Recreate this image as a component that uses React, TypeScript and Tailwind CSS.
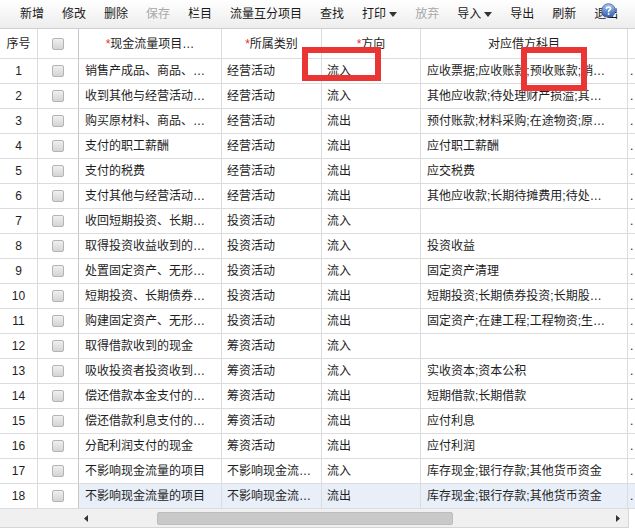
import React from "react";

type Row = [string, string, string, string];

const rows: Row[] = [
  ["销售产成品、商品、…", "经营活动", "流入", "应收票据;应收账款;预收账款;销…"],
  ["收到其他与经营活动…", "经营活动", "流入", "其他应收款;待处理财产损溢;其…"],
  ["购买原材料、商品、…", "经营活动", "流出", "预付账款;材料采购;在途物资;原…"],
  ["支付的职工薪酬", "经营活动", "流出", "应付职工薪酬"],
  ["支付的税费", "经营活动", "流出", "应交税费"],
  ["支付其他与经营活动…", "经营活动", "流出", "其他应收款;长期待摊费用;待处…"],
  ["收回短期投资、长期…", "投资活动", "流入", ""],
  ["取得投资收益收到的…", "投资活动", "流入", "投资收益"],
  ["处置固定资产、无形…", "投资活动", "流入", "固定资产清理"],
  ["短期投资、长期债券…", "投资活动", "流出", "短期投资;长期债券投资;长期股…"],
  ["购建固定资产、无形…", "投资活动", "流出", "固定资产;在建工程;工程物资;生…"],
  ["取得借款收到的现金", "筹资活动", "流入", ""],
  ["吸收投资者投资收到…", "筹资活动", "流入", "实收资本;资本公积"],
  ["偿还借款本金支付的…", "筹资活动", "流出", "短期借款;长期借款"],
  ["偿还借款利息支付的…", "筹资活动", "流出", "应付利息"],
  ["分配利润支付的现金", "筹资活动", "流出", "应付利润"],
  ["不影响现金流量的项目", "不影响现金流…", "流入", "库存现金;银行存款;其他货币资金"],
  ["不影响现金流量的项目", "不影响现金流…", "流出", "库存现金;银行存款;其他货币资金"],
];

const grid = "grid grid-cols-[38px_41px_143px_100px_99px_207px_7px]";
const cell = "border-r border-b border-[#dcdcdc] flex items-center overflow-hidden whitespace-nowrap";

function Checkbox() {
  return (
    <span className="block w-[12px] h-[12px] rounded-[2px] border border-[#b4b4b4] bg-gradient-to-b from-[#f0f0f0] to-[#d4d4d4]" />
  );
}

function Arrow() {
  return (
    <svg width="8" height="5" viewBox="0 0 8 5" className="ml-[3px]">
      <path d="M0 0 L8 0 L4 5 Z" fill="#333" />
    </svg>
  );
}

function ToolItem({ label, disabled, arrow }: { label: string; disabled?: boolean; arrow?: boolean }) {
  return (
    <div className={`flex items-center ${disabled ? "text-[#a8a8a8]" : "text-[#1a1a1a]"}`}>
      <span>{label}</span>
      {arrow && <Arrow />}
    </div>
  );
}

export default function App() {
  return (
    <div
      className="relative w-[635px] h-[532px] bg-white overflow-hidden text-[12px] text-[#1e1e1e]"
      style={{ fontFamily: '"Liberation Sans", "Noto Sans CJK SC", sans-serif' }}
    >
      {/* Toolbar */}
      <div className="h-[29px] flex items-center gap-[18px] pl-[20px] bg-gradient-to-b from-[#ffffff] to-[#ededed] border-b border-[#cfcfcf] leading-[16px]">
        <ToolItem label="新增" />
        <ToolItem label="修改" />
        <ToolItem label="删除" />
        <ToolItem label="保存" disabled />
        <ToolItem label="栏目" />
        <ToolItem label="流量互分项目" />
        <ToolItem label="查找" />
        <ToolItem label="打印" arrow />
        <ToolItem label="放弃" disabled />
        <ToolItem label="导入" arrow />
        <ToolItem label="导出" />
        <ToolItem label="刷新" />
        <ToolItem label="退出" />
      </div>

      {/* help icon overlay */}
      <svg className="absolute left-[601px] top-[3px]" width="15" height="15" viewBox="0 0 15 15">
        <defs>
          <linearGradient id="hg" x1="0" y1="0" x2="0" y2="1">
            <stop offset="0" stopColor="#a9c6f0" />
            <stop offset="1" stopColor="#2d5db6" />
          </linearGradient>
        </defs>
        <circle cx="7.5" cy="7.5" r="6.8" fill="url(#hg)" stroke="#3a5f9e" strokeWidth="0.8" />
        <path d="M5.4 5.6 C5.4 3.6 9.6 3.6 9.6 5.6 C9.6 7 7.6 7 7.6 8.6" fill="none" stroke="#fff" strokeWidth="1.6" strokeLinecap="round" />
        <circle cx="7.6" cy="11" r="0.95" fill="#fff" />
      </svg>

      {/* Header */}
      <div className={`${grid} h-[30px] bg-white`}>
        <div className={`${cell} justify-center`}>序号</div>
        <div className={`${cell} justify-center border-r-[#c8c8c8]`}>
          <Checkbox />
        </div>
        <div className={`${cell} justify-center`}>
          <span className="text-[#e03030]">*</span>现金流量项目…
        </div>
        <div className={`${cell} justify-center`}>
          <span className="text-[#e03030]">*</span>所属类别
        </div>
        <div className={`${cell} justify-center`}>
          <span className="text-[#e03030]">*</span>方向
        </div>
        <div className={`${cell} justify-center`}>对应借方科目</div>
        <div className="border-b border-[#dcdcdc]" />
      </div>

      {/* Body */}
      {rows.map((r, i) => {
        const hl = i === rows.length - 1 ? "bg-[#e9eff8]" : "";
        return (
          <div key={i} className={`${grid} h-[25px]`}>
            <div className={`${cell} justify-center`}>{i + 1}</div>
            <div className={`${cell} justify-center border-r-[#c8c8c8]`}>
              <Checkbox />
            </div>
            <div className={`${cell} pl-[6px] ${hl}`}>{r[0]}</div>
            <div className={`${cell} pl-[5px] ${hl}`}>{r[1]}</div>
            <div className={`${cell} pl-[5px] ${hl}`}>{r[2]}</div>
            <div className={`${cell} pl-[6px] ${hl}`}>{r[3]}</div>
            <div className={`border-b border-[#dcdcdc] flex items-center pl-[2px] overflow-hidden ${hl}`}>.</div>
          </div>
        );
      })}

      {/* Horizontal scrollbar */}
      <div className="flex h-[19px] w-[629px] bg-[#f0f0f0] border-b border-r border-[#d6d6d6]">
        <div className="w-[79px]" />
        <div className="w-[14px] flex items-center justify-center">
          <svg width="4" height="7" viewBox="0 0 4 7">
            <path d="M4 0 L4 7 L0 3.5 Z" fill="#333" />
          </svg>
        </div>
        <div className="flex-1 flex items-center">
          <div className="ml-[64px] w-[296px] h-[13px] bg-[#c9c9c9] border border-[#bdbdbd] rounded-[2px]" />
        </div>
        <div className="w-[20px] flex items-center justify-center">
          <svg width="4" height="7" viewBox="0 0 4 7">
            <path d="M0 0 L0 7 L4 3.5 Z" fill="#333" />
          </svg>
        </div>
      </div>

      {/* Red annotation boxes */}
      <div className="absolute left-[302px] top-[47px] w-[79px] h-[34px] border-[6px] border-[#ea3535]" />
      <div className="absolute left-[521px] top-[47px] w-[66px] h-[44px] border-[6px] border-[#ea3535]" />
    </div>
  );
}
